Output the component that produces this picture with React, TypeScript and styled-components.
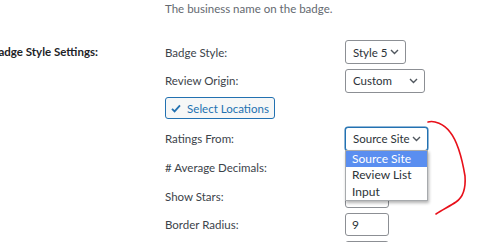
import React from "react";
import styled, { createGlobalStyle } from "styled-components";

const Global = createGlobalStyle`
  html, body { margin: 0; padding: 0; background: #fff; overflow: hidden; }
  body { font-family: Lato, "Noto Sans", sans-serif; font-size: 11.5px; color: #3c434a; }
`;

const Page = styled.div`
  position: relative;
  width: 495px;
  height: 242px;
  overflow: hidden;
  display: grid;
  grid-template-columns: 165px 1fr;
`;

const Th = styled.div`
  grid-column: 1;
  padding-top: 45px;
  margin-left: -9px;
  font-weight: 700;
  color: #1d2327;
  white-space: nowrap;
`;

const Td = styled.div`
  grid-column: 2;
  display: flex;
  flex-direction: column;
`;

const Desc = styled.p`
  margin: 0;
  height: 17px;
  line-height: 17px;
  color: #646970;
`;

const Rows = styled.div`
  margin-top: 23px;
  display: flex;
  flex-direction: column;
`;

const Row = styled.div<{ $h?: number; $mb?: number }>`
  display: flex;
  align-items: center;
  height: ${(p) => p.$h ?? 24}px;
  margin-bottom: ${(p) => p.$mb ?? 4}px;
`;

const Label = styled.span`
  width: 180px;
  flex: none;
  color: #3c434a;
  white-space: nowrap;
`;

const Control = styled.div`
  position: relative;
`;

const Select = styled.div<{ $w: number; $focus?: boolean }>`
  box-sizing: border-box;
  width: ${(p) => p.$w}px;
  height: 24px;
  border: 1px solid ${(p) => (p.$focus ? "#2271b1" : "#8c8f94")};
  box-shadow: ${(p) => (p.$focus ? "0 0 0 0.5px #2271b1" : "none")};
  border-radius: 3px;
  display: flex;
  align-items: center;
  justify-content: space-between;
  padding: 0 6px 0 7px;
  color: #2c3338;
  background: #fff;
  font-size: 11.5px;
  white-space: nowrap;
`;

const Chevron = () => (
  <svg width="9" height="6" viewBox="0 0 9 6">
    <path d="M1 1l3.5 3.5L8 1" fill="none" stroke="#50575e" strokeWidth="1.4" />
  </svg>
);

const Button = styled.div`
  box-sizing: border-box;
  width: 110px;
  height: 22px;
  border: 1px solid #2271b1;
  border-radius: 3px;
  background: #f6f7f7;
  color: #2271b1;
  display: flex;
  align-items: center;
  justify-content: center;
  gap: 6px;
  font-size: 11.5px;
  white-space: nowrap;
`;

const Input = styled.div`
  box-sizing: border-box;
  width: 44px;
  height: 23px;
  border: 1px solid #8c8f94;
  border-radius: 3px;
  padding: 0 6px;
  display: flex;
  align-items: center;
  color: #2c3338;
  background: #fff;
  font-size: 12px;
`;

const Menu = styled.ul`
  position: absolute;
  top: 23px;
  left: 0;
  width: 83px;
  box-sizing: border-box;
  margin: 0;
  padding: 0;
  list-style: none;
  background: #fff;
  border: 1px solid #a7aaad;
  box-shadow: 1px 2px 3px rgba(0, 0, 0, 0.3);
  z-index: 2;
`;

const Option = styled.li<{ $active?: boolean }>`
  height: 16.5px;
  line-height: 16px;
  padding: 0 6px;
  background: ${(p) => (p.$active ? "#5a8ef0" : "transparent")};
  color: ${(p) => (p.$active ? "#fff" : "#2c3338")};
  font-size: 12px;
  white-space: nowrap;
`;

const Annotation = styled.svg`
  position: absolute;
  left: 420px;
  top: 110px;
  pointer-events: none;
`;

export default function App() {
  return (
    <>
      <Global />
      <Page>
        <Th>Badge Style Settings:</Th>
        <Td>
          <Desc>The business name on the badge.</Desc>
          <Rows>
            <Row>
              <Label>Badge Style:</Label>
              <Select $w={61}>
                Style 5 <Chevron />
              </Select>
            </Row>
            <Row $h={25}>
              <Label>Review Origin:</Label>
              <Select $w={80}>
                Custom <Chevron />
              </Select>
            </Row>
            <Row $h={22} $mb={8}>
              <Button>
                <svg width="10" height="9" viewBox="0 0 10 9">
                  <path d="M1 4.8l2.6 2.6L9 1.4" fill="none" stroke="#2271b1" strokeWidth="1.8" />
                </svg>
                Select Locations
              </Button>
            </Row>
            <Row $h={23} $mb={6}>
              <Label>Ratings From:</Label>
              <Control>
                <Select $w={83} $focus>
                  Source Site <Chevron />
                </Select>
                <Menu>
                  <Option $active>Source Site</Option>
                  <Option>Review List</Option>
                  <Option>Input</Option>
                </Menu>
              </Control>
            </Row>
            <Row $h={23} $mb={6}>
              <Label># Average Decimals:</Label>
              <Input />
            </Row>
            <Row $h={23} $mb={5}>
              <Label>Show Stars:</Label>
              <Input />
            </Row>
            <Row $h={23} $mb={5}>
              <Label>Border Radius:</Label>
              <Input>9</Input>
            </Row>
            <Row $h={23}>
              <Label></Label>
              <Input></Input>
            </Row>
          </Rows>
        </Td>
        <Annotation width="60" height="110" viewBox="0 0 60 110">
          <path
            d="M8 12 C14 10 24 14 30 22 C38 32 42 48 45 66 C46 80 42 88 36 92 C30 96 22 100 16 104"
            fill="none"
            stroke="#e8101a"
            strokeWidth="1.6"
            strokeLinecap="round"
          />
        </Annotation>
      </Page>
    </>
  );
}
